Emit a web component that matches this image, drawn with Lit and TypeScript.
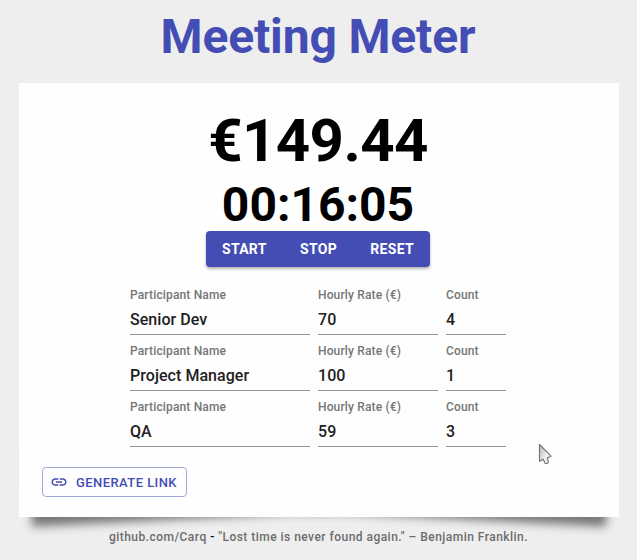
import { LitElement, html, css } from "lit";
import { customElement, property, state } from "lit/decorators.js";

interface Participant {
  name: string;
  rate: string;
  count: string;
}

@customElement("meter-field")
class MeterField extends LitElement {
  @property() label = "";
  @property() value = "";

  static styles = css`
    :host {
      display: block;
      height: 48px;
      box-sizing: border-box;
      border-bottom: 1px solid #949494;
    }
    .label {
      font-size: 12px;
      line-height: 16px;
      letter-spacing: 0.15px;
      color: #757575;
      white-space: nowrap;
    }
    .value {
      margin-top: 7px;
      font-size: 16px;
      line-height: 19px;
      letter-spacing: 0.05px;
      color: #212121;
      white-space: nowrap;
    }
  `;

  render() {
    return html`
      <div class="label">${this.label}</div>
      <div class="value">${this.value}</div>
    `;
  }
}

@customElement("app-root")
class AppRoot extends LitElement {
  @state() private participants: Participant[] = [
    { name: "Senior Dev", rate: "70", count: "4" },
    { name: "Project Manager", rate: "100", count: "1" },
    { name: "QA", rate: "59", count: "3" },
  ];

  static styles = css`
    :host {
      display: block;
      position: relative;
      box-sizing: border-box;
      width: 637px;
      height: 560px;
      overflow: hidden;
      padding: 9px 18px 0 19px;
      background: #eeeeee;
      font-family: Roboto, sans-serif;
      font-weight: 500;
    }
    h1,
    h2,
    h3 {
      margin: 0;
      font-weight: 700;
      text-align: center;
    }
    h1 {
      font-size: 48px;
      line-height: 56px;
      letter-spacing: -0.15px;
      margin-right: 2px;
      color: #434db4;
    }
    .card {
      position: relative;
      z-index: 0;
      box-sizing: border-box;
      height: 434px;
      margin-top: 18px;
      padding-top: 22px;
    }
    .surface {
      position: absolute;
      inset: 0;
      z-index: -1;
      background: #fefefe;
    }
    .card::before,
    .card::after {
      content: "";
      position: absolute;
      z-index: -2;
      bottom: 15px;
      left: 10px;
      width: 50%;
      top: 80%;
      max-width: 300px;
      box-shadow: 0 17px 10px #777;
      transform: rotate(-3deg);
    }
    .card::after {
      left: auto;
      right: 10px;
      transform: rotate(3deg);
    }
    h2 {
      font-size: 60px;
      line-height: 72px;
      letter-spacing: -0.6px;
      margin-right: 2px;
      color: #000;
    }
    h3 {
      font-size: 48px;
      line-height: 56px;
      margin: 0 2px -2px 0;
      color: #000;
    }
    .actions {
      display: flex;
      width: 224px;
      height: 36px;
      margin: 0 auto 0 187px;
      border-radius: 4px;
      background: #434db4;
      box-shadow: 0 2px 3px rgba(0, 0, 0, 0.3);
    }
    button {
      border: 0;
      background: none;
      font: 700 14px/24px Roboto, sans-serif;
      letter-spacing: 0.3px;
      text-transform: uppercase;
      color: #fff;
      padding: 0 16px;
      white-space: nowrap;
    }
    .actions {
      justify-content: space-between;
    }
    .actions button {
      padding: 0;
    }
    .actions {
      box-sizing: border-box;
      padding: 0 16px;
    }
    .rows {
      display: grid;
      row-gap: 8px;
      margin: 20px 0 0 111px;
    }
    .row {
      display: grid;
      grid-template-columns: 180px 120px 60px;
      column-gap: 8px;
    }
    .link {
      display: flex;
      align-items: center;
      box-sizing: border-box;
      width: 145px;
      height: 30px;
      margin: 20px 0 0 23px;
      padding: 1px 0 0 7px;
      border: 1px solid #9fa8da;
      border-radius: 4px;
      font-size: 13px;
      font-weight: 500;
      letter-spacing: 0.43px;
      color: #434db4;
    }
    .link svg {
      width: 18px;
      height: 18px;
      margin: -1px 8px 0 0;
      fill: currentColor;
      flex: none;
    }
    footer {
      position: relative;
      margin-top: 12px;
      font-size: 12px;
      line-height: 16px;
      letter-spacing: 0.47px;
      margin-right: 1px;
      text-align: center;
      color: #6c6c6c;
      white-space: nowrap;
    }
    .dash {
      color: #000;
    }
    .cursor {
      position: absolute;
      left: 538px;
      top: 443px;
      width: 15px;
      height: 23px;
    }
  `;

  render() {
    return html`
      <h1>Meeting Meter</h1>
      <main class="card">
        <div class="surface"></div>
        <h2>€149.44</h2>
        <h3>00:16:05</h3>
        <div class="actions">
          <button>Start</button><button>Stop</button><button>Reset</button>
        </div>
        <div class="rows">
          ${this.participants.map(
            (p) => html`
              <div class="row">
                <meter-field label="Participant Name" .value=${p.name}></meter-field>
                <meter-field label="Hourly Rate (€)" .value=${p.rate}></meter-field>
                <meter-field label="Count" .value=${p.count}></meter-field>
              </div>
            `,
          )}
        </div>
        <button class="link">
          <svg viewBox="0 0 24 24">
            <path
              d="M3.9 12c0-1.71 1.39-3.1 3.1-3.1h4V7H7c-2.76 0-5 2.24-5 5s2.24 5 5 5h4v-1.9H7c-1.71 0-3.1-1.39-3.1-3.1zM8 13h8v-2H8v2zm9-6h-4v1.9h4c1.71 0 3.1 1.39 3.1 3.1s-1.39 3.1-3.1 3.1h-4V17h4c2.76 0 5-2.24 5-5s-2.24-5-5-5z"
            />
          </svg>
          Generate link
        </button>
      </main>
      <footer>
        github.com/Carq <span class="dash">-</span> "Lost time is never found again." – Benjamin Franklin.
      </footer>
      <svg class="cursor" viewBox="0 0 15 23">
        <defs>
          <linearGradient id="pointer" x1="0" y1="0" x2="1" y2="1">
            <stop offset="0.2" stop-color="#c8c8c8" />
            <stop offset="0.6" stop-color="#f0f0ee" />
          </linearGradient>
        </defs>
        <path
          d="M1.5 1.5V18.2L5.2 16.2L6.5 19Q7 21 8.8 20.4Q11 19.8 10.2 18L9.3 15L13 13.2Z"
          fill="url(#pointer)"
          stroke="#707070"
          stroke-width="1.1"
          stroke-linejoin="round"
        />
      </svg>
    `;
  }
}
